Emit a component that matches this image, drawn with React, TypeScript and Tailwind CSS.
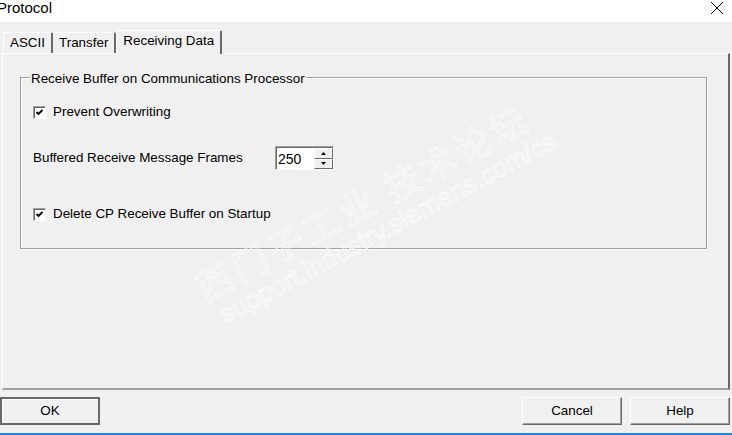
import React from "react";

const font = { fontFamily: '"Liberation Sans", Arial, "Noto Sans CJK SC", sans-serif' };

function Check({ label }: { label: string }) {
  return (
    <div className="flex items-center gap-[7px]">
      <div className="w-[13px] h-[13px] bg-white border border-t-[#a0a0a0] border-l-[#a0a0a0] border-r-white border-b-white shadow-[inset_1px_1px_0_#696969] flex items-center justify-center">
        <svg width="9" height="9" viewBox="0 0 9 9">
          <path d="M1.5 4 L3.5 6 L7.5 2" stroke="#000" strokeWidth="1.8" fill="none" />
        </svg>
      </div>
      <span>{label}</span>
    </div>
  );
}

function Btn({ label, def }: { label: string; def?: boolean }) {
  return (
    <div
      className={
        "w-[100px] h-[28px] flex items-center justify-center bg-[#f0f0f0] " +
        (def
          ? "border-2 border-[#696969] shadow-[inset_1px_1px_0_#fff]"
          : "border border-t-white border-l-white border-r-[#696969] border-b-[#696969] shadow-[inset_-1px_-1px_0_#a0a0a0]")
      }
    >
      {label}
    </div>
  );
}

export default function App() {
  return (
    <div className="w-[732px] h-[435px] bg-[#f0f0f0] text-[13.4px] text-black flex flex-col relative overflow-hidden" style={font}>
      <div className="h-[22px] bg-white flex items-center justify-between pr-[8px]">
        <span className="text-[15px] -ml-[3px] -mt-[6px]">Protocol</span>
        <svg width="14" height="14" viewBox="0 0 14 14" className="-mt-[6px]">
          <path d="M1 1 L13 13 M13 1 L1 13" stroke="#000" strokeWidth="1" />
        </svg>
      </div>

      <div className="flex items-end pl-[3px] h-[31px]">
        <div className="h-[21px] px-[6px] flex items-center border-l border-t border-white border-r-2 border-r-[#696969] rounded-t-[2px]">ASCII</div>
        <div className="h-[21px] px-[6px] flex items-center border-t border-white border-r-2 border-r-[#696969] rounded-t-[2px]">Transfer</div>
        <div className="h-[24px] px-[6px] pb-[3px] flex items-center border-t border-l border-white border-r-2 border-r-[#696969] -mb-px bg-[#f0f0f0] relative z-10 rounded-t-[2px]">Receiving Data</div>
      </div>

      <div className="mx-[2px] h-[337px] border-t border-l border-white border-r-2 border-b-2 border-r-[#696969] border-b-[#a0a0a0] pt-[23px] px-[17px]">
        <div className="relative h-[172px] border border-[#a0a0a0] shadow-[1px_1px_0_#fff,inset_1px_1px_0_#fff] mr-[4px]">
          <span className="absolute -top-[9px] left-[9px] px-[1px] bg-[#f0f0f0]">Receive Buffer on Communications Processor</span>
          <div className="pl-[12px] pt-[24px] flex flex-col">
            <Check label="Prevent Overwriting" />
            <div className="flex items-center mt-[24px] h-[24px]">
              <span className="w-[242px]">Buffered Receive Message Frames</span>
              <div className="flex h-[24px] border border-t-[#a0a0a0] border-l-[#a0a0a0] border-r-white border-b-white">
                <div className="w-[38px] bg-white border-t border-l border-[#696969] pl-[1px] pt-[2px] text-[14px] leading-[18px]">250</div>
                <div className="w-[19px] flex flex-col bg-white border-t border-[#696969]">
                  <div className="flex-1 bg-[#f0f0f0] border border-t-white border-l-white border-r-[#696969] border-b-[#696969] flex items-center justify-center">
                    <svg width="5" height="3" viewBox="0 0 5 3"><path d="M2.5 0 L5 3 L0 3 Z" fill="#000" /></svg>
                  </div>
                  <div className="flex-1 bg-[#f0f0f0] border border-t-white border-l-white border-r-[#696969] border-b-[#696969] flex items-center justify-center">
                    <svg width="5" height="3" viewBox="0 0 5 3"><path d="M0 0 L5 0 L2.5 3 Z" fill="#000" /></svg>
                  </div>
                </div>
              </div>
            </div>
            <div className="mt-[34px]">
              <Check label="Delete CP Receive Buffer on Startup" />
            </div>
          </div>
        </div>
      </div>

      <div className="flex mt-[7px] h-[28px]">
        <Btn label="OK" def />
        <div className="flex-1" />
        <Btn label="Cancel" />
        <div className="w-[8px]" />
        <Btn label="Help" />
        <div className="w-[2px]" />
      </div>

      <div className="absolute left-0 right-0 bottom-0 h-[2px] bg-[#1e88e5]" />

      <div className="absolute left-[188px] top-[270px] -rotate-[28deg] origin-top-left pointer-events-none select-none text-transparent [-webkit-text-stroke:0.8px_rgba(255,255,255,0.9)] whitespace-nowrap">
        <div className="text-[36px] leading-[42px] tracking-[4px]" style={{ fontFamily: '"Noto Sans CJK SC", sans-serif' }}>西门子工业 技术论坛</div>
        <div className="text-[26px] leading-[29px] ml-[8px]">support.industry.siemens.com/cs</div>
      </div>
    </div>
  );
}
